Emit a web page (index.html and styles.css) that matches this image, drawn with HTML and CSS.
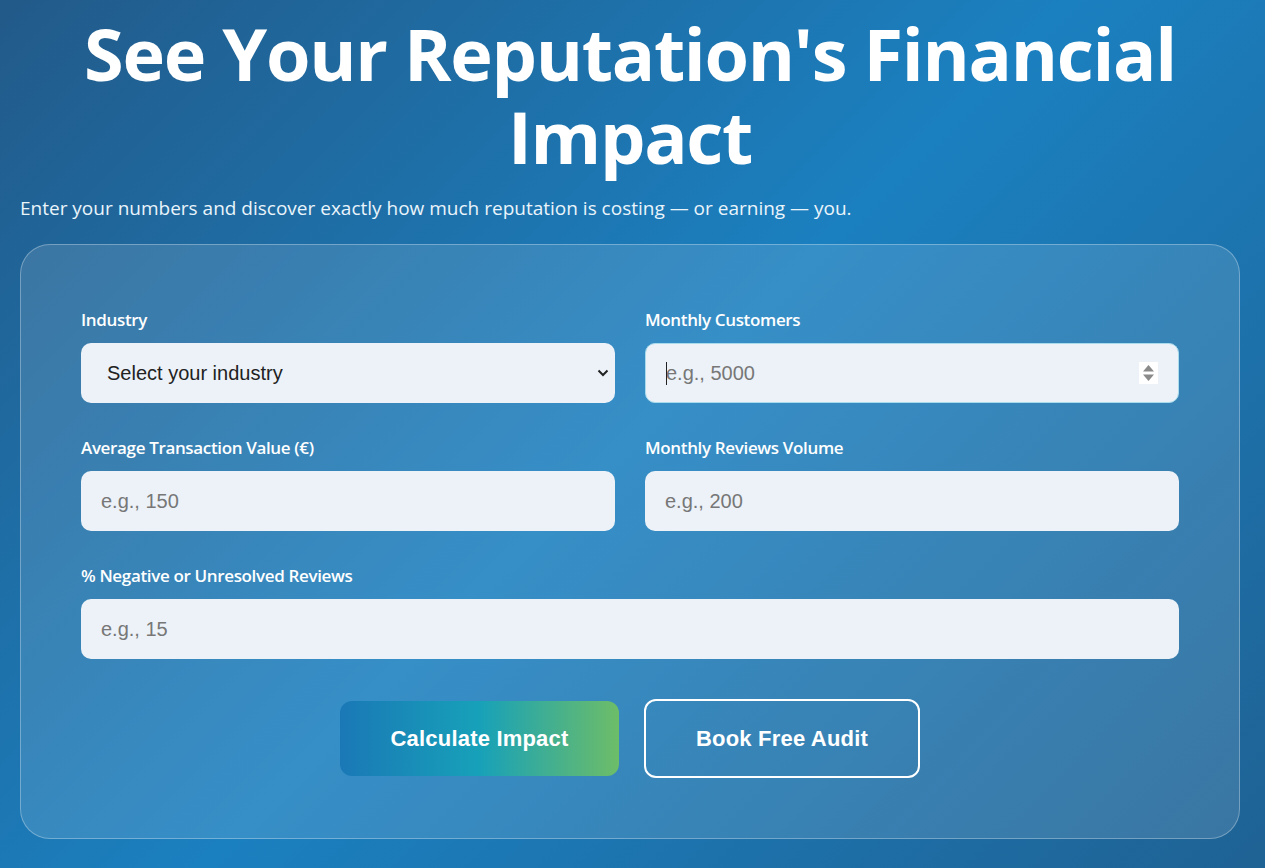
FILE: index.html
```html
<!DOCTYPE html>
<html lang="en">
<head>
<meta charset="utf-8">
<title>Reputation Impact Calculator</title>
<link rel="stylesheet" href="styles.css">
</head>
<body>
<main class="page">
  <h1 class="title">See Your Reputation's Financial Impact</h1>
  <p class="subtitle">Enter your numbers and discover exactly how much reputation is costing — or earning — you.</p>
  <form class="card">
    <div class="grid">
      <div class="field">
        <label class="label" for="industry">Industry</label>
        <select id="industry" class="control select">
          <option>Select your industry</option>
        </select>
      </div>
      <div class="field">
        <label class="label" for="customers">Monthly Customers</label>
        <div class="num-wrap">
          <input id="customers" class="control focused" type="number" placeholder="e.g., 5000">
          <span class="caret"></span>
          <svg class="spin" width="19" height="22" viewBox="0 0 19 22"><rect width="19" height="22" fill="#fff"/><path d="M9.5 3 L15 9.5 H4 Z" fill="#8a8a8a"/><path d="M9.5 19 L15 12.5 H4 Z" fill="#8a8a8a"/></svg>
        </div>
      </div>
      <div class="field">
        <label class="label" for="atv">Average Transaction Value (€)</label>
        <input id="atv" class="control" type="number" placeholder="e.g., 150">
      </div>
      <div class="field">
        <label class="label" for="reviews">Monthly Reviews Volume</label>
        <input id="reviews" class="control" type="number" placeholder="e.g., 200">
      </div>
      <div class="field wide">
        <label class="label" for="neg">% Negative or Unresolved Reviews</label>
        <input id="neg" class="control" type="number" placeholder="e.g., 15">
      </div>
    </div>
    <div class="actions">
      <button type="button" class="btn btn-primary">Calculate Impact</button>
      <button type="button" class="btn btn-outline">Book Free Audit</button>
    </div>
  </form>
</main>
</body>
</html>
```

FILE: styles.css
```css
* { box-sizing: border-box; }
html, body { margin: 0; height: 100%; }
body {
  background: linear-gradient(135deg, #225a89 0%, #1b80c0 50%, #1f6294 100%);
  font-family: "Open Sans", "Noto Sans", sans-serif;
  color: #fff;
  min-height: 868px;
  overflow: hidden;
}
.page { padding: 0 25px 0 20px; }
.title {
  margin: 12px 0 0;
  text-align: center;
  font-size: 72px;
  line-height: 83px;
  font-weight: 700;
  letter-spacing: -1.3px;
}
.subtitle {
  margin: 17px 0 23px;
  font-size: 19px;
  line-height: 26px;
  color: #eaf4fb;
}
.card {
  border: 1px solid rgba(255,255,255,0.3);
  border-radius: 30px;
  background: rgba(255,255,255,0.12);
  padding: 63px 60px 60px;
}
.grid {
  display: grid;
  grid-template-columns: 1fr 1fr;
  column-gap: 30px;
  row-gap: 33px;
}
.wide { grid-column: 1 / -1; }
.field { display: flex; flex-direction: column; }
.label {
  font-size: 17px;
  line-height: 24px;
  font-weight: 600;
  margin-bottom: 11px;
  letter-spacing: -0.35px;
}
.control {
  width: 100%;
  height: 60px;
  border: 0;
  border-radius: 10px;
  background: #ecf2f8;
  font-family: "Liberation Sans", Arial, sans-serif;
  font-size: 20px;
  color: #222;
  padding: 0 20px;
  outline: none;
}
.control::placeholder { color: #777; }
.select {
  appearance: none;
  -webkit-appearance: none;
  padding-left: 26px;
  background-image: url("data:image/svg+xml,%3Csvg xmlns='http://www.w3.org/2000/svg' width='12' height='8' viewBox='0 0 12 8'%3E%3Cpath d='M1.5 1.5 L6 6 L10.5 1.5' fill='none' stroke='%23222' stroke-width='2'/%3E%3C/svg%3E");
  background-repeat: no-repeat;
  background-position: right 6px center;
}
.num-wrap { position: relative; }
.focused { border: 1px solid #a8dcec; padding-left: 20px; }
.caret {
  position: absolute;
  left: 21px;
  top: 19px;
  width: 1px;
  height: 23px;
  background: #222;
}
.spin { position: absolute; right: 21px; top: 19px; }
input[type=number]::-webkit-inner-spin-button,
input[type=number]::-webkit-outer-spin-button { -webkit-appearance: none; margin: 0; }
input[type=number] { -moz-appearance: textfield; }
.actions {
  display: flex;
  justify-content: center;
  align-items: center;
  gap: 25px;
  margin-top: 40px;
}
.btn {
  font-family: "Liberation Sans", Arial, sans-serif;
  font-size: 22px;
  font-weight: 700;
  color: #fff;
  border-radius: 12px;
  cursor: pointer;
  letter-spacing: 0.2px;
}
.btn-primary {
  width: 279px;
  height: 75px;
  border: 0;
  background: linear-gradient(90deg, #1a78b6 0%, #17a1b9 50%, #6dbd68 100%);
}
.btn-outline {
  width: 276px;
  height: 79px;
  background: transparent;
  border: 2px solid #fff;
}
```
